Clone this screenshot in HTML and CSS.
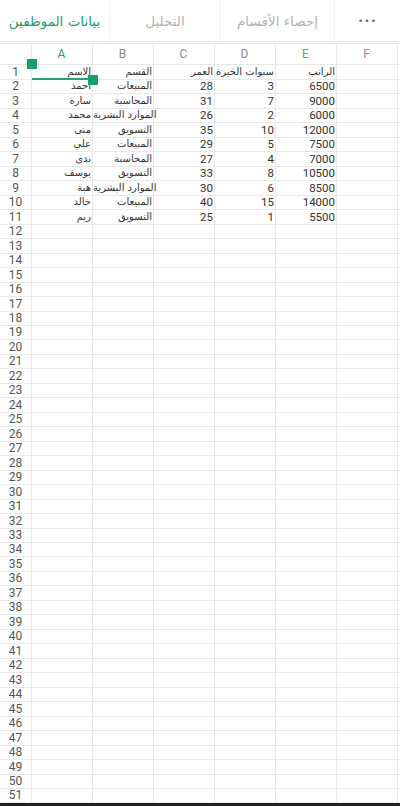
FILE: index.html
```html
<!DOCTYPE html>
<html lang="ar">
<head>
<meta charset="utf-8">
<link rel="stylesheet" href="styles.css">
</head>
<body>
<div class="screen">
  <div class="tabs">
    <div class="tab active" style="width:110px">بيانات الموظفين</div>
    <div class="tab" style="width:111px">التحليل</div>
    <div class="tab" style="width:114px">إحصاء الأقسام</div>
    <div class="tab more" style="width:65px">•••</div>
  </div>
  <div class="sheet">
    <div class="row head"><div class="rh"></div><div class="sel">A</div><div>B</div><div>C</div><div>D</div><div>E</div><div>F</div><div></div></div>
    <div class="row r1"><div class="rh">1</div><div class="a1">الاسم<span class="hline"></span><span class="handle tl"></span><span class="handle br"></span></div><div>القسم</div><div>العمر</div><div>سنوات الخبرة</div><div>الراتب</div><div></div><div></div></div>
    <div class="row"><div class="rh">2</div><div>أحمد</div><div>المبيعات</div><div>28</div><div>3</div><div>6500</div><div></div><div></div></div>
    <div class="row"><div class="rh">3</div><div>سارة</div><div>المحاسبة</div><div>31</div><div>7</div><div>9000</div><div></div><div></div></div>
    <div class="row"><div class="rh">4</div><div>محمد</div><div>الموارد البشرية</div><div>26</div><div>2</div><div>6000</div><div></div><div></div></div>
    <div class="row"><div class="rh">5</div><div>منى</div><div>التسويق</div><div>35</div><div>10</div><div>12000</div><div></div><div></div></div>
    <div class="row"><div class="rh">6</div><div>علي</div><div>المبيعات</div><div>29</div><div>5</div><div>7500</div><div></div><div></div></div>
    <div class="row"><div class="rh">7</div><div>ندى</div><div>المحاسبة</div><div>27</div><div>4</div><div>7000</div><div></div><div></div></div>
    <div class="row"><div class="rh">8</div><div>يوسف</div><div>التسويق</div><div>33</div><div>8</div><div>10500</div><div></div><div></div></div>
    <div class="row"><div class="rh">9</div><div>هبة</div><div>الموارد البشرية</div><div>30</div><div>6</div><div>8500</div><div></div><div></div></div>
    <div class="row"><div class="rh">10</div><div>خالد</div><div>المبيعات</div><div>40</div><div>15</div><div>14000</div><div></div><div></div></div>
    <div class="row"><div class="rh">11</div><div>ريم</div><div>التسويق</div><div>25</div><div>1</div><div>5500</div><div></div><div></div></div>
    <div class="row"><div class="rh">12</div><div></div><div></div><div></div><div></div><div></div><div></div><div></div></div>
    <div class="row"><div class="rh">13</div><div></div><div></div><div></div><div></div><div></div><div></div><div></div></div>
    <div class="row"><div class="rh">14</div><div></div><div></div><div></div><div></div><div></div><div></div><div></div></div>
    <div class="row"><div class="rh">15</div><div></div><div></div><div></div><div></div><div></div><div></div><div></div></div>
    <div class="row"><div class="rh">16</div><div></div><div></div><div></div><div></div><div></div><div></div><div></div></div>
    <div class="row"><div class="rh">17</div><div></div><div></div><div></div><div></div><div></div><div></div><div></div></div>
    <div class="row"><div class="rh">18</div><div></div><div></div><div></div><div></div><div></div><div></div><div></div></div>
    <div class="row"><div class="rh">19</div><div></div><div></div><div></div><div></div><div></div><div></div><div></div></div>
    <div class="row"><div class="rh">20</div><div></div><div></div><div></div><div></div><div></div><div></div><div></div></div>
    <div class="row"><div class="rh">21</div><div></div><div></div><div></div><div></div><div></div><div></div><div></div></div>
    <div class="row"><div class="rh">22</div><div></div><div></div><div></div><div></div><div></div><div></div><div></div></div>
    <div class="row"><div class="rh">23</div><div></div><div></div><div></div><div></div><div></div><div></div><div></div></div>
    <div class="row"><div class="rh">24</div><div></div><div></div><div></div><div></div><div></div><div></div><div></div></div>
    <div class="row"><div class="rh">25</div><div></div><div></div><div></div><div></div><div></div><div></div><div></div></div>
    <div class="row"><div class="rh">26</div><div></div><div></div><div></div><div></div><div></div><div></div><div></div></div>
    <div class="row"><div class="rh">27</div><div></div><div></div><div></div><div></div><div></div><div></div><div></div></div>
    <div class="row"><div class="rh">28</div><div></div><div></div><div></div><div></div><div></div><div></div><div></div></div>
    <div class="row"><div class="rh">29</div><div></div><div></div><div></div><div></div><div></div><div></div><div></div></div>
    <div class="row"><div class="rh">30</div><div></div><div></div><div></div><div></div><div></div><div></div><div></div></div>
    <div class="row"><div class="rh">31</div><div></div><div></div><div></div><div></div><div></div><div></div><div></div></div>
    <div class="row"><div class="rh">32</div><div></div><div></div><div></div><div></div><div></div><div></div><div></div></div>
    <div class="row"><div class="rh">33</div><div></div><div></div><div></div><div></div><div></div><div></div><div></div></div>
    <div class="row"><div class="rh">34</div><div></div><div></div><div></div><div></div><div></div><div></div><div></div></div>
    <div class="row"><div class="rh">35</div><div></div><div></div><div></div><div></div><div></div><div></div><div></div></div>
    <div class="row"><div class="rh">36</div><div></div><div></div><div></div><div></div><div></div><div></div><div></div></div>
    <div class="row"><div class="rh">37</div><div></div><div></div><div></div><div></div><div></div><div></div><div></div></div>
    <div class="row"><div class="rh">38</div><div></div><div></div><div></div><div></div><div></div><div></div><div></div></div>
    <div class="row"><div class="rh">39</div><div></div><div></div><div></div><div></div><div></div><div></div><div></div></div>
    <div class="row"><div class="rh">40</div><div></div><div></div><div></div><div></div><div></div><div></div><div></div></div>
    <div class="row"><div class="rh">41</div><div></div><div></div><div></div><div></div><div></div><div></div><div></div></div>
    <div class="row"><div class="rh">42</div><div></div><div></div><div></div><div></div><div></div><div></div><div></div></div>
    <div class="row"><div class="rh">43</div><div></div><div></div><div></div><div></div><div></div><div></div><div></div></div>
    <div class="row"><div class="rh">44</div><div></div><div></div><div></div><div></div><div></div><div></div><div></div></div>
    <div class="row"><div class="rh">45</div><div></div><div></div><div></div><div></div><div></div><div></div><div></div></div>
    <div class="row"><div class="rh">46</div><div></div><div></div><div></div><div></div><div></div><div></div><div></div></div>
    <div class="row"><div class="rh">47</div><div></div><div></div><div></div><div></div><div></div><div></div><div></div></div>
    <div class="row"><div class="rh">48</div><div></div><div></div><div></div><div></div><div></div><div></div><div></div></div>
    <div class="row"><div class="rh">49</div><div></div><div></div><div></div><div></div><div></div><div></div><div></div></div>
    <div class="row"><div class="rh">50</div><div></div><div></div><div></div><div></div><div></div><div></div><div></div></div>
    <div class="row"><div class="rh">51</div><div></div><div></div><div></div><div></div><div></div><div></div><div></div></div>
  </div>
  <div class="navbar"></div>
</div>
</body>
</html>
```
FILE: styles.css
```css
* { box-sizing: border-box; }
html, body { margin: 0; padding: 0; background: #fff; }
body { font-family: Roboto, "DejaVu Sans", sans-serif; }
.screen { width: 400px; height: 806px; display: flex; flex-direction: column; overflow: hidden; }
.tabs { height: 42px; flex: none; display: flex; border-bottom: 1px solid #ececec; }
.tab { height: 41px; display: flex; align-items: center; justify-content: center; border-right: 1px solid #efefef; color: #b3b3b3; font-size: 13.5px; font-family: "DejaVu Sans", Roboto, sans-serif; white-space: nowrap; }
.tab.active { color: #1f9e6c; }
.tab.more { border-right: none; font-size: 9px; color: #666; letter-spacing: 1px; }
.sheet { flex: 1; overflow: hidden; margin-top: 1px; }
.row { display: grid; grid-template-columns: 32px repeat(7, 61px); height: 14.48px; }
.row > div { border-right: 1px solid #e8e8e8; border-bottom: 1px solid #e8e8e8; text-align: right; padding-right: 1px; font-size: 10px; line-height: 13px; color: #333; white-space: nowrap; overflow: visible; font-family: "DejaVu Sans", Roboto, sans-serif; }
.row:not(.head):not(.r1) > div:nth-child(n+4):nth-child(-n+6) { font-family: Roboto, sans-serif; font-size: 11.5px; line-height: 14px; }
.row > div.rh { text-align: center; padding-right: 0; font-family: Roboto, sans-serif; font-size: 12px; line-height: 14px; color: #555; }
.row.head { height: 22px; }
.row.head > div { border-top: 1px solid #e8e8e8; text-align: center; font-family: Roboto, sans-serif; font-size: 12px; line-height: 20px; color: #8a8a8a; }
.row.head > div.sel { color: #1f9e6c; }
.a1 { position: relative; }
.hline { position: absolute; left: 0; right: 3px; bottom: -1px; height: 2px; background: #2aa172; }
.handle { position: absolute; width: 10px; height: 10px; background: #17a06a; }
.handle.tl { left: -5px; top: -6px; }
.handle.br { right: -6px; bottom: -6px; }
.navbar { height: 3px; flex: none; background: #222; }
```
